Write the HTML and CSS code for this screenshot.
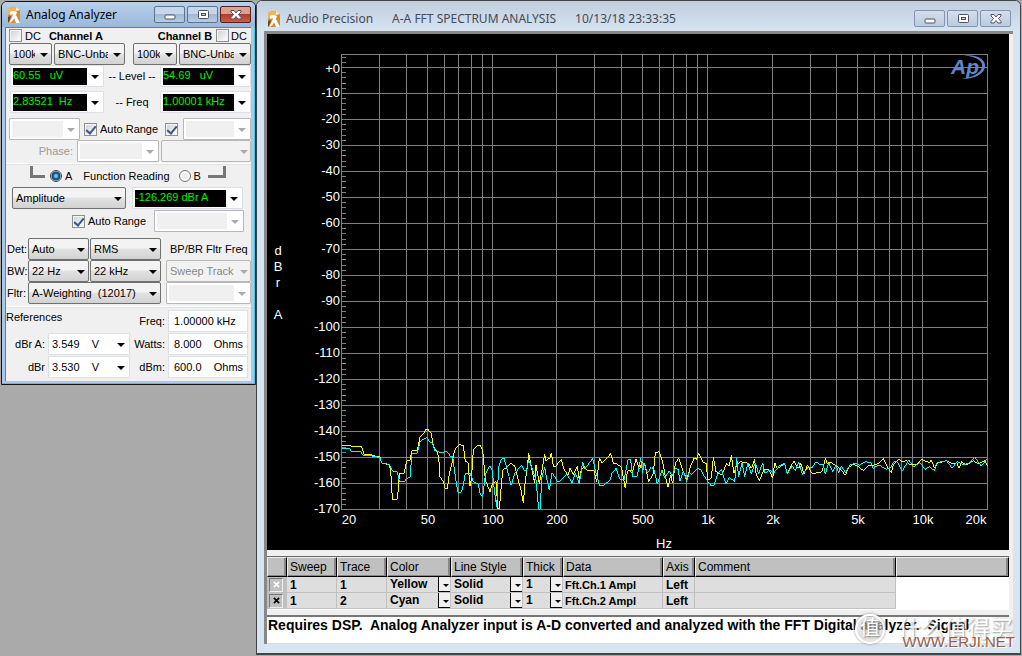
FILE: index.html
```html
<!DOCTYPE html>
<html lang="en">
<head>
<meta charset="utf-8">
<title>Audio Precision</title>
<link rel="stylesheet" href="styles.css">
</head>
<body>
<svg class="defs" width="0" height="0" aria-hidden="true">
  <symbol id="app" viewBox="0 0 12 16">
    <path d="M0 1L8 0 12 3V16H0z" fill="#d98a2c"/>
    <path d="M0 1L8 0 8 4 0 8z" fill="#f0b65c"/>
    <path d="M8 0L12 3 8 4z" fill="#fff1cf"/>
    <path d="M2 5Q5 3 9 5L8 8 12 16H8L6 11Q5 15 1 16L4 10 5 7 2 8z" fill="#fff"/>
    <path d="M0 10L3 9 1 15H0z" fill="#5a4a3a"/>
  </symbol>
  <symbol id="min" viewBox="0 0 14 12"><rect x="2" y="6" width="10" height="4" rx="1" fill="#fff" stroke="#4c5060"/></symbol>
  <symbol id="max" viewBox="0 0 14 12"><rect x="2.5" y="1.500" width="10" height="8" rx="1" fill="#fff" stroke="#4c5060"/><rect x="5.500" y="4.500" width="4" height="2" fill="#c3cfe0" stroke="#4c5060"/></symbol>
  <symbol id="close" viewBox="0 0 14 12"><path d="M2 1.500H5L7 4 9 1.500H12V3L9.500 5.500 12 8.500V10H9L7 7.500 5 10H2V8.500L4.500 5.500 2 3z" fill="#fff" stroke="#4c5060"/></symbol>
</svg>
<main class="desktop">
  <section class="window analyzer">
    <header class="titlebar">
      <svg class="appicon"><use href="#app"/></svg>
      <h1>Analog Analyzer</h1>
      <div class="winbuttons">
        <button aria-label="Minimize"><svg><use href="#min"/></svg></button>
        <button aria-label="Maximize"><svg><use href="#max"/></svg></button>
        <button class="close" aria-label="Close"><svg><use href="#close"/></svg></button>
      </div>
    </header>
    <form class="panel">
      <div class="row channels">
        <label><input type="checkbox"><span>DC</span></label>
        <b>Channel A</b>
        <b class="chb">Channel B</b>
        <label><input type="checkbox"><span>DC</span></label>
      </div>
      <div class="row inputs">
        <span class="sel"><select aria-label="Impedance A"><option>100k</option></select></span>
        <span class="sel"><select aria-label="Input A"><option>BNC-Unbal</option></select></span>
        <span class="sel"><select aria-label="Impedance B"><option>100k</option></select></span>
        <span class="sel"><select aria-label="Input B"><option>BNC-Unbal</option></select></span>
      </div>
      <div class="row meters">
        <div class="combo"><input class="lcd" aria-label="Level A" value="60.55&nbsp;&nbsp; uV"><button type="button" class="arrow" aria-label="Level A unit"></button></div>
        <span>-- Level --</span>
        <div class="combo"><input class="lcd" aria-label="Level B" value="54.69&nbsp;&nbsp; uV"><button type="button" class="arrow" aria-label="Level B unit"></button></div>
      </div>
      <div class="row meters freq">
        <div class="combo"><input class="lcd" aria-label="Frequency A" value="2.83521&nbsp; Hz"><button type="button" class="arrow" aria-label="Frequency A unit"></button></div>
        <span>-- Freq</span>
        <div class="combo"><input class="lcd" aria-label="Frequency B" value="1.00001 kHz"><button type="button" class="arrow" aria-label="Frequency B unit"></button></div>
      </div>
      <div class="row ranges">
        <div class="combo off"><input aria-label="Range A" disabled><button type="button" class="arrow" aria-label="Range A list" disabled></button></div>
        <label><input type="checkbox" checked><span>Auto Range</span></label>
        <input type="checkbox" aria-label="Auto Range B" checked>
        <div class="combo off"><input aria-label="Range B" disabled><button type="button" class="arrow" aria-label="Range B list" disabled></button></div>
      </div>
      <div class="row phase">
        <span class="dim">Phase:</span>
        <div class="combo off"><input aria-label="Phase" disabled><button type="button" class="arrow" aria-label="Phase unit" disabled></button></div>
        <span class="sel off"><select aria-label="Phase range" disabled><option></option></select></span>
      </div>
      <div class="row function">
        <span class="hook"></span>
        <label><input type="radio" name="reading" checked><span>A</span></label>
        <span class="caption">Function Reading</span>
        <label><input type="radio" name="reading"><span>B</span></label>
        <span class="hook right"></span>
      </div>
      <div class="row amplitude">
        <span class="sel"><select aria-label="Function"><option>Amplitude</option></select></span>
        <div class="combo"><input class="lcd" aria-label="Reading" value="-126.269 dBr A"><button type="button" class="arrow" aria-label="Reading unit"></button></div>
      </div>
      <div class="row auto">
        <label><input type="checkbox" checked><span>Auto Range</span></label>
        <div class="combo off"><input aria-label="Function range" disabled><button type="button" class="arrow" aria-label="Function range list" disabled></button></div>
      </div>
      <div class="filters">
        <label for="det">Det:</label>
        <span class="sel"><select id="det"><option>Auto</option></select></span>
        <span class="sel"><select aria-label="Detector"><option>RMS</option></select></span>
        <span class="fltr">BP/BR Fltr Freq</span>
        <label for="bw">BW:</label>
        <span class="sel"><select id="bw"><option>22 Hz</option></select></span>
        <span class="sel"><select aria-label="High limit"><option>22 kHz</option></select></span>
        <span class="sel off last"><select aria-label="Filter frequency" disabled><option>Sweep Track</option></select></span>
        <label for="flt">Fltr:</label>
        <span class="sel wide"><select id="flt"><option>A-Weighting&nbsp; (12017)</option></select></span>
        <div class="combo off last"><input aria-label="Filter value" disabled><button type="button" class="arrow" aria-label="Filter value unit" disabled></button></div>
      </div>
      <div class="references">
        <span class="heading">References</span>
        <label for="rf">Freq:</label>
        <input id="rf" class="value" value="1.00000 kHz">
        <label for="ra">dBr A:</label>
        <div class="combo"><input id="ra" value="3.549&nbsp;&nbsp;&nbsp; V"><button type="button" class="arrow" aria-label="dBr A unit"></button></div>
        <label for="rw">Watts:</label>
        <input id="rw" class="value" value="8.000&nbsp;&nbsp;&nbsp; Ohms">
        <label for="rb">dBr</label>
        <div class="combo"><input id="rb" value="3.530&nbsp;&nbsp;&nbsp; V"><button type="button" class="arrow" aria-label="dBr unit"></button></div>
        <label for="rm">dBm:</label>
        <input id="rm" class="value" value="600.0&nbsp;&nbsp;&nbsp; Ohms">
      </div>
    </form>
  </section>

  <section class="window spectrum">
    <header class="titlebar">
      <svg class="appicon"><use href="#app"/></svg>
      <h1><span>Audio Precision</span><span>A-A FFT SPECTRUM ANALYSIS</span><span>10/13/18 23:33:35</span></h1>
      <div class="winbuttons">
        <button aria-label="Minimize"><svg><use href="#min"/></svg></button>
        <button aria-label="Maximize"><svg><use href="#max"/></svg></button>
        <button aria-label="Close"><svg><use href="#close"/></svg></button>
      </div>
    </header>
    <div class="client">
      <svg class="plot" viewBox="267 34 742 516" role="img" aria-label="FFT spectrum">
        <rect x="267" y="34" width="742" height="516"/>
        <path class="grid" d="M341.500 54V510M379.500 54V510M406.500 54V510M427.500 54V510M444.500 54V510M458.500 54V510M471.500 54V510M482.500 54V510M492.500 54V510M556.500 54V510M594.500 54V510M621.500 54V510M642.500 54V510M659.500 54V510M673.500 54V510M686.500 54V510M697.500 54V510M707.500 54V510M772.500 54V510M810.500 54V510M836.500 54V510M857.500 54V510M874.500 54V510M889.500 54V510M901.500 54V510M912.500 54V510M922.500 54V510M987.500 54V510"/>
        <path class="grid" d="M341 54.500H988M341 67.500H988M341 93.500H988M341 119.500H988M341 145.500H988M341 171.500H988M341 197.500H988M341 223.500H988M341 249.500H988M341 275.500H988M341 301.500H988M341 327.500H988M341 353.500H988M341 379.500H988M341 405.500H988M341 431.500H988M341 457.500H988M341 483.500H988M341 509.500H988"/>
        <path class="ticks" d="M344 56.600V510"/>
        <g class="ylabels">
          <text x="340" y="73">+0</text><text x="340" y="97">-10</text><text x="340" y="123">-20</text><text x="340" y="149">-30</text><text x="340" y="175">-40</text><text x="340" y="201">-50</text><text x="340" y="227">-60</text><text x="340" y="253">-70</text><text x="340" y="279">-80</text><text x="340" y="305">-90</text><text x="340" y="331">-100</text><text x="340" y="357">-110</text><text x="340" y="383">-120</text><text x="340" y="409">-130</text><text x="340" y="435">-140</text><text x="340" y="461">-150</text><text x="340" y="487">-160</text><text x="340" y="513">-170</text>
        </g>
        <g class="xlabels">
          <text x="349" y="524">20</text><text x="428" y="524">50</text><text x="493" y="524">100</text><text x="557" y="524">200</text><text x="643" y="524">500</text><text x="708" y="524">1k</text><text x="773" y="524">2k</text><text x="858" y="524">5k</text><text x="923" y="524">10k</text><text x="976" y="524">20k</text>
          <text x="664" y="548">Hz</text>
          <text x="278" y="255">d</text><text x="278" y="271">B</text><text x="278" y="287">r</text><text x="278" y="319">A</text>
        </g>
        <g class="traces" transform="translate(330 430) scale(.33333)">
          <polyline stroke="#ff0" points="35,46 62,46 62,49 95,49 102,73 125,74 128,77 150,80 155,100 178,104 181,118 184,150 187,208 202,208 206,162 208,130 222,130 230,94 240,90 246,62 262,60 270,22 280,12 288,-2 296,0 304,12 310,48 320,64 326,82 330,140 340,155 346,177 352,177 358,130 368,90 374,60 386,44 400,46 406,94 414,98 420,168 424,150 430,60 440,48 450,46 458,62 466,150 480,185 488,160 498,155 504,237 508,237 512,190 518,120 526,115 542,100 554,108 562,140 572,175 580,220 586,150 592,110 596,70 602,100 614,160 618,105 628,162 636,120 644,72 648,92 660,84 664,68 670,108 676,110 694,88 702,118 714,135 720,115 730,135 742,108 748,150 754,118 764,110 770,120 792,122 800,155 808,85 816,98 832,84 842,70 850,100 860,102 874,110 886,175 892,125 900,120 906,130 918,88 928,118 936,98 944,100 956,156 970,130 976,68 988,65 998,95 1006,140 1014,172 1022,135 1028,160 1036,100 1046,84 1056,115 1070,148 1082,108 1092,85 1100,88 1106,70 1120,98 1128,100 1134,150 1144,145 1150,82 1158,125 1174,135 1182,120 1190,100 1198,108 1204,75 1212,130 1218,110 1230,95 1256,100 1264,115 1274,88 1278,130 1288,152 1302,118 1318,120 1328,145 1334,98 1342,115 1364,102 1372,130 1392,92 1402,112 1408,115 1412,98 1422,132 1432,105 1446,130 1470,128 1478,120 1486,85 1492,100 1502,97 1520,108 1532,118 1546,136 1556,112 1570,103 1588,112 1600,122 1614,108 1632,105 1646,100 1660,85 1672,110 1684,128 1690,105 1706,88 1716,95 1730,92 1738,105 1760,102 1774,88 1798,98 1804,90 1814,115 1822,100 1850,92 1868,102 1880,98 1888,115 1894,95 1910,105 1930,92 1946,102 1964,92 1972,108"/>
          <polyline stroke="#0ff" points="35,56 60,56 64,64 92,65 100,76 125,78 150,83 155,100 178,103 188,124 202,125 208,154 222,155 230,146 240,142 246,72 262,70 270,36 280,28 290,22 300,36 308,40 314,62 330,67 352,65 360,78 368,80 376,140 384,187 392,188 398,175 406,130 420,130 430,155 444,162 452,196 458,200 466,135 472,120 480,108 486,120 492,170 500,232 506,110 514,88 522,84 532,120 544,165 554,130 564,118 574,106 584,122 590,120 596,90 608,120 618,150 626,238 630,238 636,140 644,112 650,145 658,180 666,128 674,140 682,156 692,152 710,132 726,158 736,128 748,162 758,95 764,118 788,85 796,120 808,165 818,168 840,150 846,130 858,115 870,148 882,150 894,90 902,90 908,140 922,138 932,85 938,128 942,100 952,130 964,110 972,120 982,162 996,120 1004,145 1018,122 1026,138 1036,115 1044,118 1050,152 1060,122 1070,155 1078,125 1084,135 1094,125 1102,115 1114,120 1122,138 1134,155 1144,168 1152,165 1164,128 1174,118 1188,162 1198,142 1214,155 1220,85 1226,140 1236,98 1244,140 1254,100 1264,132 1276,98 1286,132 1298,98 1304,130 1318,120 1330,130 1348,108 1364,100 1372,132 1386,108 1396,122 1406,97 1418,134 1434,112 1446,114 1458,95 1470,104 1480,105 1486,132 1496,98 1508,125 1518,105 1526,128 1534,108 1546,128 1560,105 1576,100 1588,106 1606,95 1622,98 1630,115 1646,105 1670,118 1682,112 1694,92 1704,98 1716,124 1736,90 1752,112 1768,97 1786,118 1798,110 1814,122 1820,98 1850,92 1866,115 1882,94 1900,105 1920,98 1934,80 1946,98 1954,108 1970,88"/>
        </g>
        <g class="aplogo">
          <text x="951" y="74">Ap</text>
          <path d="M964 55.500C978 54 986 60 985 67C984 74 974 79.500 961 79C972 77.500 981 73 982 67C983 61 977 56.500 964 55.500z"/>
        </g>
      </svg>
      <div class="tracebox">
        <table>
          <colgroup><col class="c20"><col class="c50"><col class="c50"><col class="c64"><col class="c72"><col class="c40"><col class="c100"><col class="c32"><col class="c200"><col></colgroup>
          <thead><tr><th></th><th>Sweep</th><th>Trace</th><th>Color</th><th>Line Style</th><th>Thick</th><th>Data</th><th>Axis</th><th>Comment</th><th></th></tr></thead>
          <tbody>
            <tr><td><button class="mark on" aria-label="Toggle trace 1"><svg viewBox="0 0 8 8"><path d="M1 1L7 7M7 1L1 7"/></svg></button></td><td>1</td><td>1</td><td><div class="pick">Yellow<button aria-label="Color 1"></button></div></td><td><div class="pick">Solid<button aria-label="Line style 1"></button></div></td><td><div class="pick">1<button aria-label="Thickness 1"></button></div></td><td class="data">Fft.Ch.1 Ampl</td><td>Left</td><td></td><td class="blank"></td></tr>
            <tr><td><button class="mark" aria-label="Toggle trace 2"><svg viewBox="0 0 8 8"><path d="M1 1L7 7M7 1L1 7"/></svg></button></td><td>1</td><td>2</td><td><div class="pick">Cyan<button aria-label="Color 2"></button></div></td><td><div class="pick">Solid<button aria-label="Line style 2"></button></div></td><td><div class="pick">1<button aria-label="Thickness 2"></button></div></td><td class="data">Fft.Ch.2 Ampl</td><td>Left</td><td></td><td class="blank"></td></tr>
          </tbody>
        </table>
      </div>
      <div class="note">
        <input aria-label="Description" readonly value="Requires DSP.&nbsp; Analog Analyzer input is A-D converted and analyzed with the FFT Digital analyzer.&nbsp; Signal">
        <button class="arrow" aria-label="Scroll up"></button>
      </div>
    </div>
    <div class="watermark" aria-hidden="true"><span class="seal">值</span><span class="brand">什么值得买</span><span class="site">WWW.ERJI.NET</span></div>
  </section>
</main>
</body>
</html>
```
FILE: styles.css
```css
* { box-sizing: border-box; }
body {
  margin: 0;
  min-height: 100vh;
  background: #abaaaa;
  color: #000;
  font: 11px/14px "Liberation Sans", Arial, sans-serif;
}
button, input, select { font: inherit; color: inherit; margin: 0; padding: 0; border: 0; border-radius: 0; }
.defs { position: absolute; }
.desktop { display: flex; align-items: flex-start; min-height: 100vh; }

/* windows */
.window { border: 1px solid #444; border-radius: 6px 6px 0 0; }
.analyzer { flex: none; width: 255px; margin: 1px 0 0 1px; padding: 0 4px 3px 3px; background: #a9c8e6; border-color: #111; box-shadow: inset -1px -1px #2fd3ea; }
.spectrum { flex: 1; min-width: 0; margin-right: 1px; background: #d7e4f2; position: relative; padding: 0 7px 9px; border-width: 1px 1px 2px; }
.titlebar { display: flex; align-items: center; height: 25px; }
.analyzer .titlebar { margin: 0 -4px 0 -3px; padding: 0 4px 0 3px; border-radius: 5px 5px 0 0; background: linear-gradient(#b9d0e8, #98b8dc); }
.spectrum .titlebar { height: 30px; margin: 0 -7px; padding: 5px 9px 0 11px; border-radius: 5px 5px 0 0; background: linear-gradient(#bfcddd, #d7e4f2); }
.titlebar h1 { display: flex; gap: 19px; margin: 0 0 0 6px; font: 12px/16px "Noto Sans", "Open Sans", sans-serif; }
.spectrum h1 { color: #444b55; }
.appicon { width: 12px; height: 16px; margin-left: 3px; }
.spectrum .appicon { margin-left: 0; }
.winbuttons { display: flex; gap: 2px; margin-left: auto; }
.winbuttons button { display: grid; place-items: center; width: 31px; height: 17px; border: 1px solid #8393b1; border-radius: 2px; background: linear-gradient(#d3deec, #bccbdf); }
.analyzer .winbuttons button { border-color: #5d7394; background: linear-gradient(#c6d7ea 45%, #a3b9d3 50%, #b5cce5); }
.analyzer .winbuttons .close { border-color: #5c1f1f; background: linear-gradient(#dba092 45%, #b63a2b 50%, #c75e44); }
.winbuttons svg { width: 14px; height: 12px; }

/* analyzer form */
.panel { overflow: hidden; padding-bottom: 3px; background: #f0f0f0; border: 1px solid #777; border-width: 1px 0 0 1px; }
.row { display: flex; align-items: center; height: 22px; padding-left: 4px; }
.row label { display: flex; align-items: center; gap: 3px; white-space: nowrap; }
input[type=checkbox] { appearance: none; flex: none; width: 13px; height: 13px; border: 1px solid #8e8f8f; background: linear-gradient(135deg, #cbcfd5, #fff); box-shadow: inset 0 0 0 1px #f4f4f4; }
input[type=checkbox]:checked { display: grid; place-items: center; }
input[type=checkbox]:checked::after { content: ""; width: 4px; height: 8px; margin-bottom: 2px; border: solid #3d5693; border-width: 0 2px 2px 0; transform: rotate(40deg); }
input[type=radio] { appearance: none; width: 12px; height: 12px; border: 1px solid #777; border-radius: 50%; background: radial-gradient(#e8e8e8, #fff); }
input[type=radio]:checked { border-color: #345; background: radial-gradient(circle, #6cc7ee 0 1px, #165a87 3px, #173f5c 4px, #eee 5px); }

.sel { position: relative; display: block; height: 22px; }
.sel select { appearance: none; display: block; width: 100%; height: 100%; padding: 0 16px 1px 3px; border: 1px solid #707070; border-radius: 2px; background: linear-gradient(#f3f3f3 45%, #e2e2e2 50%, #d2d2d2); }
.sel::after { content: ""; position: absolute; right: 4px; top: 10px; border: 4px solid transparent; border-top-color: #000; border-bottom: 0; pointer-events: none; }
.sel.off select { opacity: 1; color: #888; background: #f2f2f2; border-color: #b8b8b8; }
.sel.off::after { right: 3px; border-top-color: #aaa; }

.combo { display: flex; align-items: center; height: 22px; padding: 2px 0 2px 2px; border: 1px solid #dcdfe5; border-radius: 1px; background: #fff; }
.combo input { flex: 1; min-width: 0; width: 0; height: 16px; padding-left: 1px; background: transparent; }
.combo .lcd { height: 17px; background: #000; color: #00f000; padding: 0 0 3px; }
.combo.off { border-color: #b8b8b8; }
.combo.off input { background: #f0f0f0; }
.arrow { display: grid; place-items: center; flex: none; width: 16px; height: 16px; background: transparent; }
.arrow::after { content: ""; margin-top: 2px; border: 4px solid transparent; border-top-color: #000; border-bottom: 0; }
.off .arrow::after { border-top-color: #aaa; }

.channels { height: 15px; padding-left: 3px; }
.channels b { margin-left: 8px; }
.channels .chb { margin: 0 4px 0 auto; }
.channels label:last-child { margin-right: 4px; gap: 2px; }
.inputs { display: grid; grid-template-columns: 43px 77px 44px 1fr; column-gap: 2px; padding-left: 3px; }
.inputs .sel:nth-child(2) { margin-right: 6px; }
.meters { display: grid; grid-template-columns: 94px 1fr 91px; text-align: center; }
.meters .arrow, .amplitude .arrow { width: 16px; }
.freq { margin: 4px 0 5px; }
.ranges { gap: 4px; padding-left: 3px; }
.ranges .combo:first-child { width: 71px; }
.ranges .combo:last-child { flex: 1; margin-left: 1px; }
.ranges label + input { margin-left: 3px; }
.phase { display: grid; grid-template-columns: 65px 82px 1fr; column-gap: 2px; }
.phase .dim { color: #999; text-align: right; padding-right: 2px; }
.function { border-top: 1px solid #fff; box-shadow: inset 0 1px #dfe3e8; margin-top: 1px; height: 24px; white-space: nowrap; }
.hook { width: 15px; height: 12px; margin: 0 5px 8px 20px; border: solid #777; border-width: 0 0 3px 3px; }
.hook.right { border-width: 0 3px 3px 0; margin-left: 7px; width: 18px; }
.function .caption { margin: 0 9px 0 11px; }
.amplitude { gap: 6px; padding-left: 6px; }
.amplitude .sel { width: 114px; }
.amplitude .combo { width: 111px; }
.auto { margin-top: 1px; gap: 8px; padding-left: 66px; }
.auto .combo { width: 90px; }
.filters { display: grid; grid-template-columns: 20px 61px 71px 1fr; column-gap: 1px; align-items: center; margin-top: 6px; padding-left: 1px; padding-bottom: 2px; white-space: nowrap; }
.filters > * { min-width: 0; }
.filters .wide { grid-column: span 2; }
.filters .fltr { padding-left: 8px; }
.filters .last { margin-left: 4px; }
.references { display: grid; grid-template-columns: 39px 82px 32px 80px; column-gap: 3px; row-gap: 1px; align-items: center; padding: 3px 0 0; border-top: 1px solid #fff; box-shadow: inset 0 1px #dfe3e8; }
.references label { text-align: right; white-space: nowrap; }
.references .heading { grid-column: span 2; height: 22px; }
.value { height: 22px; width: 100%; padding-left: 5px; border: 1px solid #dcdfe5; background: #fff; }

/* spectrum client area */
.client { border: solid #888; border-width: 3px 0 0 3px; padding-right: 4px; background: #f0f0f0; }
.plot { display: block; width: 100%; height: auto; }
.grid { fill: none; stroke: #808080; shape-rendering: crispEdges; }
.ticks { stroke: #808080; stroke-width: 4px; stroke-dasharray: 1 4.2; shape-rendering: crispEdges; }
.plot text { fill: #fff; font: 13px "Liberation Sans", Arial, sans-serif; }
.ylabels { text-anchor: end; }
.xlabels { text-anchor: middle; }
.traces { fill: none; stroke-width: 3; shape-rendering: crispEdges; }
.aplogo { fill: #6484c8; }
.plot .aplogo text { fill: #6484c8; font: italic bold 21px "Liberation Sans", Arial, sans-serif; }
.tracebox { margin-top: 6px; border-top: 1px solid #666; border-bottom: 1px solid #fff; background: #fff; }
table { width: 100%; table-layout: fixed; border-collapse: separate; border-spacing: 0; font-size: 12px; }
.c20 { width: 20px; } .c50 { width: 50px; } .c64 { width: 64px; } .c72 { width: 72px; } .c40 { width: 40px; } .c100 { width: 100px; } .c32 { width: 32px; } .c200 { width: 201px; }
th { height: 20px; padding: 0 0 0 2px; text-align: left; font-weight: normal; background: #c0c0c0; border: solid; border-width: 1px; border-color: #eee #000 #000 #eee; box-shadow: inset -2px -1px #888; white-space: nowrap; }
td { height: 16px; padding: 0 0 0 3px; line-height: 14px; font-weight: bold; background: #dedede; border: solid #c0c0c0; border-width: 0 1px 1px 0; white-space: nowrap; }
td:first-child { padding: 0 0 0 2px; background: #c0c0c0; }
td.data { padding-left: 2px; font-size: 11px; }
td.blank { background: #fff; border: 0; }
.mark { display: grid; place-items: center; width: 14px; height: 14px; border: 1px solid #eee; border-top-color: #777; border-left-color: #777; background: #c0c0c0; }
.mark svg { width: 7px; height: 7px; stroke: #000; stroke-width: 2px; }
.mark.on svg { stroke: #fff; }
.pick { display: flex; justify-content: space-between; height: 15px; line-height: 14px; }
.pick button { display: grid; place-items: center; width: 12px; height: 15px; background: #f0f0f0; border: solid #000; border-width: 0 0 1px 1px; }
.pick button::after { content: ""; margin: 3px 0 0 2px; border: 3px solid transparent; border-top-color: #000; border-bottom: 0; }
.note { display: flex; align-items: flex-start; height: 29px; margin-top: 5px; background: #fff; border-top: 2px solid #777; border-bottom: 1px solid #ddd; }
.note input { flex: 1; min-width: 0; height: 16px; padding-left: 1px; background: transparent; font-size: 14px; font-weight: bold; }
.note .arrow { background: #f0f0f0; }
.note .arrow::after { border-width: 0 3px 4px; border-color: transparent transparent #888; }

/* overlay */
.watermark { position: absolute; right: 4px; bottom: 2px; width: 161px; height: 38px; pointer-events: none; color: #fff; font-family: "Liberation Sans", "Noto Sans CJK SC", sans-serif; }
.seal { position: absolute; left: 0; top: 1px; width: 30px; height: 30px; border: 2px solid #fff; border-radius: 50%; font-size: 20px; line-height: 25px; text-align: center; background: rgba(210, 210, 210, .6); box-shadow: 0 0 3px #888; text-shadow: 1px 1px 2px #777; }
.brand { position: absolute; right: 3px; top: 4px; font-size: 23px; line-height: 25px; white-space: nowrap; opacity: .9; text-shadow: 1px 1px 2px #888; }
.site { position: absolute; right: 1px; bottom: 0; font-size: 15px; line-height: 18px; color: #96604c; white-space: nowrap; text-shadow: 1px 1px #fff; }
```
